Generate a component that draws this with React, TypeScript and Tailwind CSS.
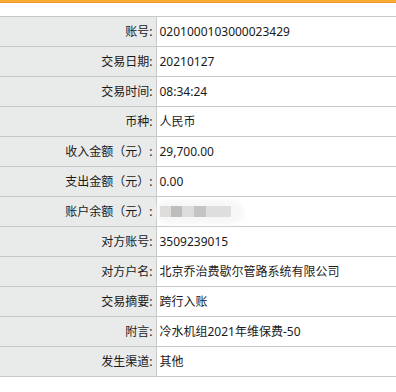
const rows: [string, string][] = [
  ['账号:', '0201000103000023429'],
  ['交易日期:', '20210127'],
  ['交易时间:', '08:34:24'],
  ['币种:', '人民币'],
  ['收入金额（元）:', '29,700.00'],
  ['支出金额（元）:', '0.00'],
  ['账户余额（元）:', ''],
  ['对方账号:', '3509239015'],
  ['对方户名:', '北京乔治费歇尔管路系统有限公司'],
  ['交易摘要:', '跨行入账'],
  ['附言:', '冷水机组2021年维保费-50'],
  ['发生渠道:', '其他'],
];

const Blurred = () => (
  <div className="relative h-[29px] w-[90px]">
    <div className="absolute left-[-4px] top-[3px] h-[24px] w-[88px] rounded-full bg-[#f7f7f7] blur-[2px]" />
    <div className="absolute left-0 top-[9px] flex h-[11px]">
      <div className="w-[11px] bg-[#dedcda]" />
      <div className="w-[11px] bg-[#bdbdbd]" />
      <div className="w-[12px] bg-[#dcdcdc]" />
      <div className="w-[12px] bg-[#c4c4c4]" />
      <div className="w-[25px] bg-[#dedede]" />
    </div>
  </div>
);

export default function App() {
  return (
    <div className="h-[392px] w-[396px] bg-white font-['Noto_Sans','Noto_Sans_CJK_SC',sans-serif] text-[12px] text-[#1a1a1a]">
      <div className="h-[3px] border-b border-[#e99a24] bg-[#f7aa35]" />
      <div className="h-[13px]" />
      <table className="w-full border-collapse">
        <tbody>
          {rows.map(([label, value]) => (
            <tr key={label} className="h-[30px] border-y border-[#c8c8c8]">
              <td className="w-[156px] border-r border-[#c8c8c8] bg-[#e9eaea] pr-[3px] text-right align-middle leading-none">
                {label}
              </td>
              <td className="pl-[3px] align-middle leading-none">
                {label === '账户余额（元）:' ? <Blurred /> : value}
              </td>
            </tr>
          ))}
        </tbody>
      </table>
    </div>
  );
}
